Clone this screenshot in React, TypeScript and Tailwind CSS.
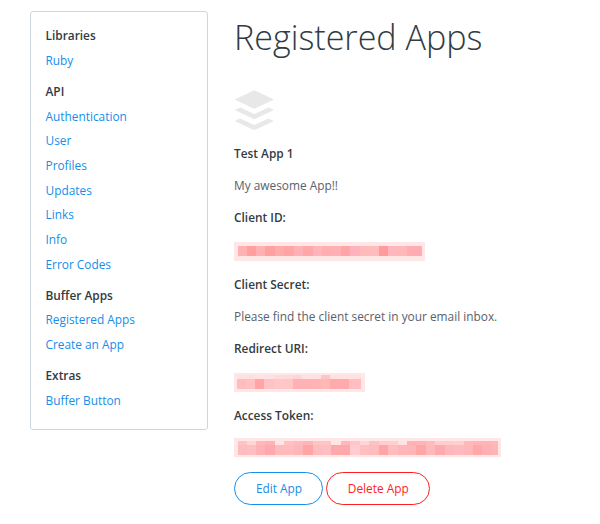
const navGroups = [
  { title: "Libraries", links: ["Ruby"] },
  {
    title: "API",
    links: ["Authentication", "User", "Profiles", "Updates", "Links", "Info", "Error Codes"],
  },
  { title: "Buffer Apps", links: ["Registered Apps", "Create an App"] },
  { title: "Extras", links: ["Buffer Button"] },
];

type MosaicRow = { height: number; cells: string[] };

const clientId: MosaicRow[] = [
  {
    height: 10,
    cells: [
      "#ffb0b0", "#ff9fa0", "#ffb0b2", "#ffa0a1", "#ffabab", "#ffa5a3", "#ffb1b5", "#ffa8aa", "#ffb5b9", "#ffafaf",
      "#ffb0b0", "#ffa4a7", "#ffb4bd", "#ffbbbb", "#ffbcbc", "#ff9b9c", "#ffb6bd", "#ffb8b9", "#ffadb2", "#ffadb2",
    ],
  },
];

const redirectUri: MosaicRow[] = [
  {
    height: 4,
    cells: [
      "#ffe1e1", "#ffe0e0", "#ffe3e3", "#ffe1e1", "#ffdcdc", "#ffdada", "#ffd5d5",
      "#ffe1e1", "#ffe1e1", "#ffc4c4", "#ffe1e1", "#ffe1e1", "#ffe1e1",
    ],
  },
  {
    height: 10,
    cells: [
      "#ffbcbf", "#ffc1c1", "#ffa5a8", "#ffc2c5", "#ffc7ca", "#ffc5c7", "#ffb1b3",
      "#ffb2b5", "#ffb3b5", "#ffb9b4", "#ffabae", "#ffabad", "#ffbec2",
    ],
  },
];

const accessToken: MosaicRow[] = [
  {
    height: 4,
    cells: [
      "#ffc3c5", "#ffd5d5", "#ffb7ba", "#ffb3b5", "#ffe5e6", "#ffc2c4", "#ffbcbf", "#ffb5b8", "#ffc4c5", "#ffc4c5",
      "#ffe7e7", "#ffb7bb", "#ffc5c8", "#ffd7d8", "#ffc2c3", "#ffcdcf", "#ffd0d2", "#ffe3e3", "#ffb2b4", "#ffb5b7",
      "#ffbabb", "#ffced0", "#ffcdce", "#ffd0d2", "#ffb9bb", "#ffb4b7", "#ffb4b7", "#ffb8ba",
    ],
  },
  {
    height: 10,
    cells: [
      "#ffbcbe", "#ffbfc1", "#ffb2b6", "#ffa9ac", "#ffbabd", "#ffbbbe", "#ffb6b9", "#ffa4a7", "#ffbcbf", "#ffbfc2",
      "#ffa8ab", "#ffa7aa", "#ffcdcf", "#ffbfc0", "#ffbcbf", "#ffa5a7", "#ffbdbf", "#ffb6b9", "#ffb5b8", "#ffa6a9",
      "#ffb8bb", "#ffabad", "#ffb7bb", "#ffbabd", "#ffb6b9", "#ffa7a9", "#ffb0b2", "#ffb4b7",
    ],
  },
];

function Mosaic({ rows, className }: { rows: MosaicRow[]; className: string }) {
  return (
    <div className={`bg-[#ffe7e7] ${className}`}>
      {rows.map((row, i) => (
        <div key={i} className="flex" style={{ height: row.height }}>
          {row.cells.map((color, j) => (
            <span
              key={j}
              className="w-[9.45px] shrink-0 first:w-[8.5px] last:w-auto last:flex-1"
              style={{ backgroundColor: color }}
            />
          ))}
        </div>
      ))}
    </div>
  );
}

function BufferLogo() {
  return (
    <svg className="block" width="41" height="41" viewBox="0 0 41 41" fill="#e8e8e8">
      <path d="M20.3 0.2 40 9.5 20.3 18.8 0.6 9.5Z" />
      <path d="M6.2 17.6 20.3 24 34.4 17.6 40 20 20.3 29.3 0.6 20Z" />
      <path d="M6.2 28.6 20.3 35 34.4 28.6 40 31 20.3 40.3 0.6 31Z" />
    </svg>
  );
}

function Sidebar() {
  return (
    <nav className="h-[419px] w-[178px] shrink-0 rounded-[3px] border border-[#ced7df] pl-[14.5px] pt-[11px]">
      {navGroups.map((group) => (
        <div key={group.title} className="mb-[6.6px] leading-[24.65px]">
          <h2 className="font-semibold text-[#323b43]">{group.title}</h2>
          <ul>
            {group.links.map((link) => (
              <li key={link}>
                <a href="#" className="text-[#168eea]">{link}</a>
              </li>
            ))}
          </ul>
        </div>
      ))}
    </nav>
  );
}

export default function App() {
  return (
    <div className="flex h-[524px] w-[600px] items-start gap-[26px] overflow-hidden bg-white pl-[30px] pt-[11px] font-['Open_Sans',sans-serif] text-[11.86px]">
      <Sidebar />
      <main className="leading-5 text-[#59626a]">
        <h1 className="text-[34.1px] font-light leading-[52px] text-[#323b43]">Registered Apps</h1>
        <div className="mt-[27px]">
          <BufferLogo />
        </div>
        <h3 className="mt-3 font-semibold text-[#323b43]">Test App 1</h3>
        <p className="mt-3">My awesome App!!</p>
        <h3 className="mt-3 font-semibold text-[#323b43]">Client ID:</h3>
        <Mosaic rows={clientId} className="mt-[15px] h-[19px] w-[191px] pl-1 pr-[3px] pt-1" />
        <h3 className="mt-[13px] font-semibold text-[#323b43]">Client Secret:</h3>
        <p className="mt-3">Please find the client secret in your email inbox.</p>
        <h3 className="mt-3 font-semibold text-[#323b43]">Redirect URI:</h3>
        <Mosaic rows={redirectUri} className="mt-[15px] h-[19px] w-[131px] pl-[3px] pr-1 pt-[2px]" />
        <h3 className="mt-[13px] font-semibold text-[#323b43]">Access Token:</h3>
        <Mosaic rows={accessToken} className="mt-[13px] h-[19px] w-[267px] pl-1 pr-[3px] pt-[3px]" />
        <div className="mt-[15px] flex gap-[3px]">
          <button className="h-[33px] w-[89px] rounded-full border border-[#168eea] pb-[2px] pl-px text-[#168eea]">
            Edit App
          </button>
          <button className="h-[33px] w-[103.5px] rounded-full border border-[#ff1e1e] pb-[2px] pl-px text-[#ff1e1e]">
            Delete App
          </button>
        </div>
      </main>
    </div>
  );
}
